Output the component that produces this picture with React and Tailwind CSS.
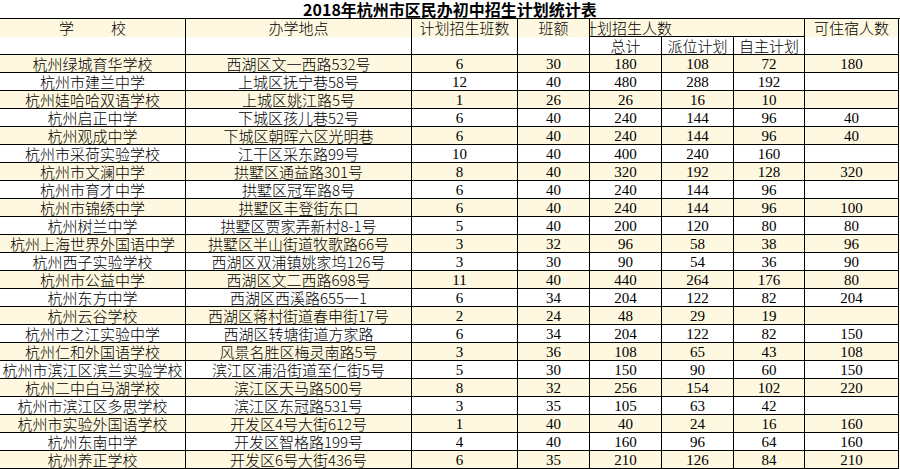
import React from 'react';

const rows = [
  ['杭州绿城育华学校', '西湖区文一西路532号', '6', '30', '180', '108', '72', '180'],
  ['杭州市建兰中学', '上城区抚宁巷58号', '12', '40', '480', '288', '192', ''],
  ['杭州娃哈哈双语学校', '上城区姚江路5号', '1', '26', '26', '16', '10', ''],
  ['杭州启正中学', '下城区孩儿巷52号', '6', '40', '240', '144', '96', '40'],
  ['杭州观成中学', '下城区朝晖六区光明巷', '6', '40', '240', '144', '96', '40'],
  ['杭州市采荷实验学校', '江干区采东路99号', '10', '40', '400', '240', '160', ''],
  ['杭州市文澜中学', '拱墅区通益路301号', '8', '40', '320', '192', '128', '320'],
  ['杭州市育才中学', '拱墅区冠军路8号', '6', '40', '240', '144', '96', ''],
  ['杭州市锦绣中学', '拱墅区丰登街东口', '6', '40', '240', '144', '96', '100'],
  ['杭州树兰中学', '拱墅区贾家弄新村8-1号', '5', '40', '200', '120', '80', '80'],
  ['杭州上海世界外国语中学', '拱墅区半山街道牧歌路66号', '3', '32', '96', '58', '38', '96'],
  ['杭州西子实验学校', '西湖区双浦镇姚家坞126号', '3', '30', '90', '54', '36', '90'],
  ['杭州市公益中学', '西湖区文二西路698号', '11', '40', '440', '264', '176', '80'],
  ['杭州东方中学', '西湖区西溪路655一1', '6', '34', '204', '122', '82', '204'],
  ['杭州云谷学校', '西湖区蒋村街道春申街17号', '2', '24', '48', '29', '19', ''],
  ['杭州市之江实验中学', '西湖区转塘街道方家路', '6', '34', '204', '122', '82', '150'],
  ['杭州仁和外国语学校', '风景名胜区梅灵南路5号', '3', '36', '108', '65', '43', '108'],
  ['杭州市滨江区滨兰实验学校', '滨江区浦沿街道至仁街5号', '5', '30', '150', '90', '60', '150'],
  ['杭州二中白马湖学校', '滨江区天马路500号', '8', '32', '256', '154', '102', '220'],
  ['杭州市滨江区多思学校', '滨江区东冠路531号', '3', '35', '105', '63', '42', ''],
  ['杭州市实验外国语学校', '开发区4号大街612号', '1', '40', '40', '24', '16', '160'],
  ['杭州东南中学', '开发区智格路199号', '4', '40', '160', '96', '64', '160'],
  ['杭州养正学校', '开发区6号大街436号', '6', '35', '210', '126', '84', '210'],
];

const gridCols = 'grid grid-cols-[186px_226px_106px_72px_72px_72px_71px_94px]';
const cjk = "font-['Noto_Sans_CJK_SC',sans-serif]";
const num = "font-['Liberation_Serif','Noto_Sans_CJK_SC',serif]";
const cell = 'border-r border-b border-black whitespace-nowrap text-center';
const merged = 'row-span-2 bg-[linear-gradient(to_bottom,#fdf8df_18px,#ffffff_18px)] leading-[17px]';

export default function App() {
  return (
    <div className={`w-[900px] h-[469px] bg-white overflow-hidden text-black ${cjk}`}>
      <div className="h-[18px] text-center text-[16px] font-bold leading-[18px]">
        2018年杭州市区民办初中招生计划统计表
      </div>

      <div className="border-t border-black font-light">
        {/* header */}
        <div className={`${gridCols} grid-rows-[18px_18px] text-[15px]`}>
          <div className={`${cell} ${merged} flex justify-center gap-[37px]`}>
            <span>学</span>
            <span>校</span>
          </div>
          <div className={`${cell} ${merged}`}>办学地点</div>
          <div className={`${cell} ${merged}`}>计划招生班数</div>
          <div className={`${cell} ${merged}`}>班额</div>
          <div className={`${cell} col-span-3 overflow-hidden bg-[#fdf8df] text-left leading-[17px]`}>
            <span className="ml-[-8px]">计划招生人数</span>
          </div>
          <div className={`${cell} ${merged}`}>可住宿人数</div>
          <div className={`${cell} leading-[17px]`}>总计</div>
          <div className={`${cell} leading-[17px]`}>派位计划</div>
          <div className={`${cell} leading-[17px]`}>自主计划</div>
        </div>

        {/* body */}
        {rows.map((r, i) => (
          <div
            key={r[0]}
            className={`${gridCols} h-[18px] text-[15px] ${i % 2 === 0 ? 'bg-[#fdf8df]' : 'bg-white'}`}
          >
            <div className={`${cell} leading-[17px]`}>{r[0]}</div>
            <div className={`${cell} leading-[17px]`}>{r[1]}</div>
            <div className={`${cell} ${num} font-normal leading-[16px] pt-[1px] pr-[10px]`}>{r[2]}</div>
            {r.slice(3).map((v, j) => (
              <div key={j} className={`${cell} ${num} font-normal leading-[16px] pt-[1px]`}>
                {v}
              </div>
            ))}
          </div>
        ))}
      </div>
    </div>
  );
}
